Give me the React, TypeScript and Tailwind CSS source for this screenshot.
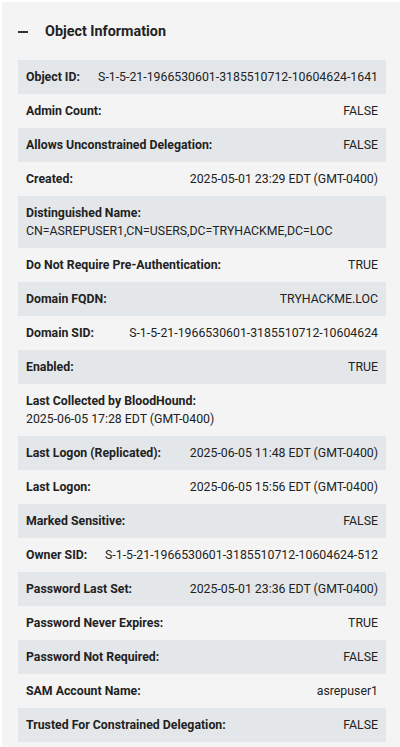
const rows: { label: string; value: string; stacked?: boolean }[] = [
  { label: "Object ID:", value: "S-1-5-21-1966530601-3185510712-10604624-1641" },
  { label: "Admin Count:", value: "FALSE" },
  { label: "Allows Unconstrained Delegation:", value: "FALSE" },
  { label: "Created:", value: "2025-05-01 23:29 EDT (GMT-0400)" },
  { label: "Distinguished Name:", value: "CN=ASREPUSER1,CN=USERS,DC=TRYHACKME,DC=LOC", stacked: true },
  { label: "Do Not Require Pre-Authentication:", value: "TRUE" },
  { label: "Domain FQDN:", value: "TRYHACKME.LOC" },
  { label: "Domain SID:", value: "S-1-5-21-1966530601-3185510712-10604624" },
  { label: "Enabled:", value: "TRUE" },
  { label: "Last Collected by BloodHound:", value: "2025-06-05 17:28 EDT (GMT-0400)", stacked: true },
  { label: "Last Logon (Replicated):", value: "2025-06-05 11:48 EDT (GMT-0400)" },
  { label: "Last Logon:", value: "2025-06-05 15:56 EDT (GMT-0400)" },
  { label: "Marked Sensitive:", value: "FALSE" },
  { label: "Owner SID:", value: "S-1-5-21-1966530601-3185510712-10604624-512" },
  { label: "Password Last Set:", value: "2025-05-01 23:36 EDT (GMT-0400)" },
  { label: "Password Never Expires:", value: "TRUE" },
  { label: "Password Not Required:", value: "FALSE" },
  { label: "SAM Account Name:", value: "asrepuser1" },
  { label: "Trusted For Constrained Delegation:", value: "FALSE" },
];

export default function App() {
  return (
    <div className="w-[400px] h-[747px] bg-white pl-[2px] pt-[2px] overflow-hidden font-['Roboto',sans-serif] text-[#222]">
      <div className="h-full bg-[#f4f4f4]">
        {/* Header */}
        <div className="flex items-center h-[58px] px-4 pt-[2px]">
          <span className="w-[10px] h-[2px] bg-[#333] mr-[17px]" />
          <span className="text-[14.35px] font-bold">Object Information</span>
        </div>

        {/* Rows */}
        <div className="ml-4 mr-[14px]">
          {rows.map((row, i) => (
            <div
              key={row.label}
              className={`px-2 py-2 text-[12.3px] leading-[18px] ${i % 2 === 0 ? "bg-[#e4e7ea]" : ""} ${
                row.stacked ? "flex flex-col" : "flex justify-between gap-4"
              }`}
            >
              <span className="font-bold whitespace-nowrap">{row.label}</span>
              <span className="whitespace-nowrap">{row.value}</span>
            </div>
          ))}
        </div>
      </div>
    </div>
  );
}
